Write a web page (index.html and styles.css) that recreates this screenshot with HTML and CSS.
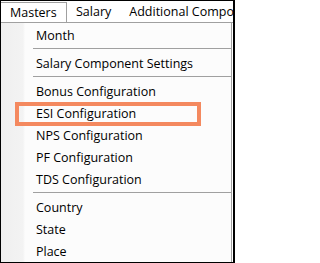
FILE: index.html
```html
<!DOCTYPE html>
<html>
<head>
<meta charset="utf-8">
<link rel="stylesheet" href="styles.css">
</head>
<body>
<div class="frame">
  <div class="menubar">
    <div class="menu-item active">Masters</div>
    <div class="menu-item">Salary</div>
    <div class="menu-item">Additional Components</div>
  </div>
  <div class="dropdown">
    <div class="row">Month</div>
    <div class="sep"></div>
    <div class="row">Salary Component Settings</div>
    <div class="sep"></div>
    <div class="row">Bonus Configuration</div>
    <div class="row">ESI Configuration</div>
    <div class="row">NPS Configuration</div>
    <div class="row">PF Configuration</div>
    <div class="row">TDS Configuration</div>
    <div class="sep"></div>
    <div class="row">Country</div>
    <div class="row">State</div>
    <div class="row">Place</div>
  </div>
  <div class="highlight"></div>
</div>
</body>
</html>
```
FILE: styles.css
```css
html, body {
  margin: 0;
  padding: 0;
  background: #fff;
}
.frame {
  position: relative;
  width: 235px;
  height: 263px;
  box-sizing: border-box;
  border: 1px solid #000;
  border-right-width: 2px;
  display: flex;
  flex-direction: column;
  overflow: hidden;
  font-family: "Open Sans", "Noto Sans", sans-serif;
  font-size: 12.5px;
  color: #000;
}
.menubar {
  display: flex;
  height: 21px;
  border-bottom: 1px solid #a0a0a0;
  background: #fff;
  white-space: nowrap;
  flex: none;
  overflow: hidden;
}
.menu-item {
  flex: none;
  padding: 0 9px;
  line-height: 20px;
  margin-top: 1px;
}
.menu-item.active {
  width: 56px;
  padding: 0 0 0 9px;
  border-top: 1px solid #a0a0a0;
  border-right: 1px solid #a0a0a0;
  margin-bottom: -1px;
  background: #fff;
  line-height: 19px;
}
.dropdown {
  flex: 1;
  margin-right: 1px;
  border-right: 1px solid #a0a0a0;
  padding-top: 1px;
  background: linear-gradient(90deg, #efefef 0, #f3f3f3 22px, #fcfcfc 24px, #fcfcfc 100%);
}
.row {
  height: 22px;
  line-height: 23px;
  padding-left: 35px;
  white-space: nowrap;
}
.sep {
  height: 6px;
  margin-left: 32px;
  background: linear-gradient(#0000 0 2px, #a0a0a0 2px 3px, #0000 3px);
}
.highlight {
  position: absolute;
  left: 14px;
  top: 101px;
  width: 186px;
  height: 24px;
  box-sizing: border-box;
  border: 4px solid #f4895f;
}
```
